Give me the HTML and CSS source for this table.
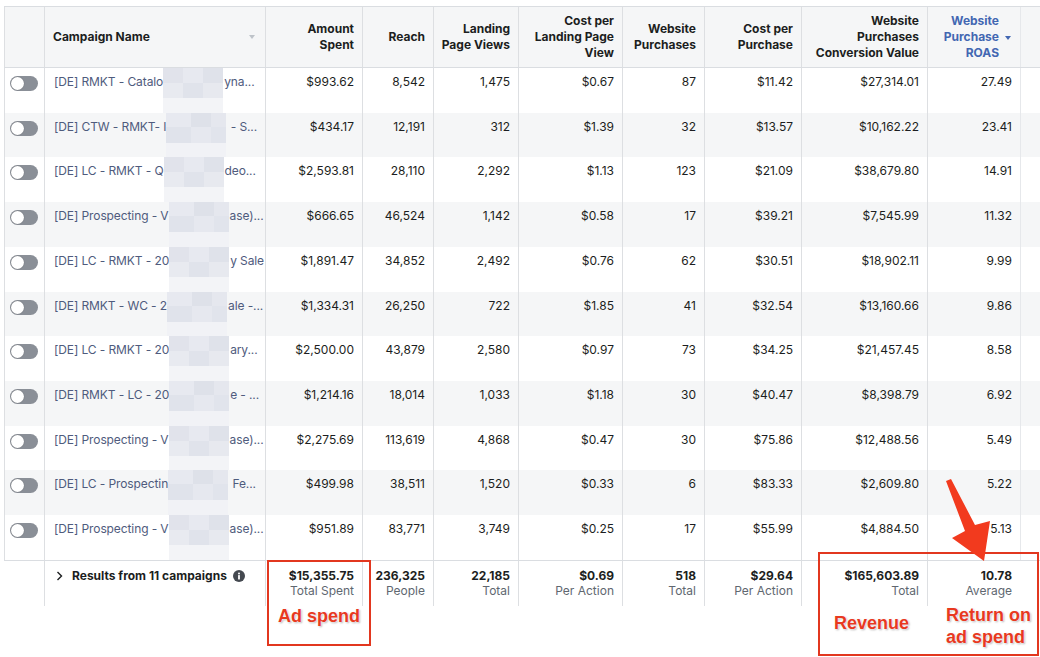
FILE: index.html
```html
<!DOCTYPE html>
<html lang="en">
<head>
<meta charset="utf-8">
<title>Campaigns</title>
<link rel="stylesheet" href="styles.css">
</head>
<body>
<div class="page">
  <div class="table">
    <div class="row head">
      <div class="c c0"></div>
      <div class="c c1 hname"><span>Campaign Name</span><i class="sort grey"></i></div>
      <div class="c num"><span class="ht">Amount<br>Spent</span></div>
      <div class="c num"><span class="ht">Reach</span></div>
      <div class="c num"><span class="ht">Landing<br>Page Views</span></div>
      <div class="c num"><span class="ht">Cost per<br>Landing Page<br>View</span></div>
      <div class="c num"><span class="ht">Website<br>Purchases</span></div>
      <div class="c num"><span class="ht">Cost per<br>Purchase</span></div>
      <div class="c num"><span class="ht">Website<br>Purchases<br>Conversion Value</span></div>
      <div class="c num roas"><span class="ht">Website<br>Purchase<br>ROAS</span><i class="sort blue"></i></div>
      <div class="c fill"></div>
    </div>

    <div class="row">
      <div class="c c0"><span class="tog"></span></div>
      <div class="c c1 name"><span class="pre">[DE] RMKT - Catalo</span><span class="blur b1"></span><span class="post">yna...</span></div>
      <div class="c num">$993.62</div><div class="c num">8,542</div><div class="c num">1,475</div><div class="c num">$0.67</div><div class="c num">87</div><div class="c num">$11.42</div><div class="c num">$27,314.01</div><div class="c num">27.49</div><div class="c fill"></div>
    </div>
    <div class="row">
      <div class="c c0"><span class="tog"></span></div>
      <div class="c c1 name"><span class="pre">[DE] CTW - RMKT- I</span><span class="blur b2"></span><span class="post">&nbsp;- S...</span></div>
      <div class="c num">$434.17</div><div class="c num">12,191</div><div class="c num">312</div><div class="c num">$1.39</div><div class="c num">32</div><div class="c num">$13.57</div><div class="c num">$10,162.22</div><div class="c num">23.41</div><div class="c fill"></div>
    </div>
    <div class="row">
      <div class="c c0"><span class="tog"></span></div>
      <div class="c c1 name"><span class="pre">[DE] LC - RMKT - Q</span><span class="blur b1"></span><span class="post">deo...</span></div>
      <div class="c num">$2,593.81</div><div class="c num">28,110</div><div class="c num">2,292</div><div class="c num">$1.13</div><div class="c num">123</div><div class="c num">$21.09</div><div class="c num">$38,679.80</div><div class="c num">14.91</div><div class="c fill"></div>
    </div>
    <div class="row">
      <div class="c c0"><span class="tog"></span></div>
      <div class="c c1 name"><span class="pre">[DE] Prospecting - V</span><span class="blur b2"></span><span class="post">ase)...</span></div>
      <div class="c num">$666.65</div><div class="c num">46,524</div><div class="c num">1,142</div><div class="c num">$0.58</div><div class="c num">17</div><div class="c num">$39.21</div><div class="c num">$7,545.99</div><div class="c num">11.32</div><div class="c fill"></div>
    </div>
    <div class="row">
      <div class="c c0"><span class="tog"></span></div>
      <div class="c c1 name"><span class="pre">[DE] LC - RMKT - 20</span><span class="blur b1"></span><span class="post">y Sale</span></div>
      <div class="c num">$1,891.47</div><div class="c num">34,852</div><div class="c num">2,492</div><div class="c num">$0.76</div><div class="c num">62</div><div class="c num">$30.51</div><div class="c num">$18,902.11</div><div class="c num">9.99</div><div class="c fill"></div>
    </div>
    <div class="row">
      <div class="c c0"><span class="tog"></span></div>
      <div class="c c1 name"><span class="pre">[DE] RMKT - WC - 2</span><span class="blur b2"></span><span class="post">ale -...</span></div>
      <div class="c num">$1,334.31</div><div class="c num">26,250</div><div class="c num">722</div><div class="c num">$1.85</div><div class="c num">41</div><div class="c num">$32.54</div><div class="c num">$13,160.66</div><div class="c num">9.86</div><div class="c fill"></div>
    </div>
    <div class="row">
      <div class="c c0"><span class="tog"></span></div>
      <div class="c c1 name"><span class="pre">[DE] LC - RMKT - 20</span><span class="blur b1"></span><span class="post">ary...</span></div>
      <div class="c num">$2,500.00</div><div class="c num">43,879</div><div class="c num">2,580</div><div class="c num">$0.97</div><div class="c num">73</div><div class="c num">$34.25</div><div class="c num">$21,457.45</div><div class="c num">8.58</div><div class="c fill"></div>
    </div>
    <div class="row">
      <div class="c c0"><span class="tog"></span></div>
      <div class="c c1 name"><span class="pre">[DE] RMKT - LC - 20</span><span class="blur b2"></span><span class="post">e - ...</span></div>
      <div class="c num">$1,214.16</div><div class="c num">18,014</div><div class="c num">1,033</div><div class="c num">$1.18</div><div class="c num">30</div><div class="c num">$40.47</div><div class="c num">$8,398.79</div><div class="c num">6.92</div><div class="c fill"></div>
    </div>
    <div class="row">
      <div class="c c0"><span class="tog"></span></div>
      <div class="c c1 name"><span class="pre">[DE] Prospecting - V</span><span class="blur b1"></span><span class="post">ase)...</span></div>
      <div class="c num">$2,275.69</div><div class="c num">113,619</div><div class="c num">4,868</div><div class="c num">$0.47</div><div class="c num">30</div><div class="c num">$75.86</div><div class="c num">$12,488.56</div><div class="c num">5.49</div><div class="c fill"></div>
    </div>
    <div class="row">
      <div class="c c0"><span class="tog"></span></div>
      <div class="c c1 name"><span class="pre">[DE] LC - Prospectin</span><span class="blur b2"></span><span class="post">&nbsp;Fe...</span></div>
      <div class="c num">$499.98</div><div class="c num">38,511</div><div class="c num">1,520</div><div class="c num">$0.33</div><div class="c num">6</div><div class="c num">$83.33</div><div class="c num">$2,609.80</div><div class="c num">5.22</div><div class="c fill"></div>
    </div>
    <div class="row">
      <div class="c c0"><span class="tog"></span></div>
      <div class="c c1 name"><span class="pre">[DE] Prospecting - V</span><span class="blur b1"></span><span class="post">ase)...</span></div>
      <div class="c num">$951.89</div><div class="c num">83,771</div><div class="c num">3,749</div><div class="c num">$0.25</div><div class="c num">17</div><div class="c num">$55.99</div><div class="c num">$4,884.50</div><div class="c num">5.13</div><div class="c fill"></div>
    </div>

    <div class="row foot">
      <div class="c c0"></div>
      <div class="c c1 res">
        <svg class="chev" width="7" height="10" viewBox="0 0 7 10"><polyline points="1.5,1 5.5,5 1.5,9" fill="none" stroke="#1c1e21" stroke-width="1.4"/></svg>
        <span>Results from 11 campaigns</span>
        <svg class="info" width="12" height="12" viewBox="0 0 12 12"><circle cx="6" cy="6" r="6" fill="#444950"/><circle cx="6" cy="3.4" r="1" fill="#fff"/><rect x="5.1" y="5" width="1.8" height="4.4" rx="0.5" fill="#fff"/></svg>
      </div>
      <div class="c num"><b>$15,355.75</b><span>Total Spent</span></div>
      <div class="c num"><b>236,325</b><span>People</span></div>
      <div class="c num"><b>22,185</b><span>Total</span></div>
      <div class="c num"><b>$0.69</b><span>Per Action</span></div>
      <div class="c num"><b>518</b><span>Total</span></div>
      <div class="c num"><b>$29.64</b><span>Per Action</span></div>
      <div class="c num"><b>$165,603.89</b><span>Total</span></div>
      <div class="c num"><b>10.78</b><span>Average</span></div>
      <div class="c fill"></div>
    </div>
  </div>

  <div class="ann box-spend"><span class="label">Ad spend</span></div>
  <div class="ann box-rev">
    <span class="label rev">Revenue</span>
    <span class="label roasl">Return on<br>ad spend</span>
  </div>
  <svg class="arrow" width="60" height="90" viewBox="0 0 60 90">
    <polygon points="6,5 11,3 35,49 50,45 44,85 12,62 25,55" fill="#f23a1e"/>
  </svg>
</div>
</body>
</html>
```

FILE: styles.css
```css
* { box-sizing: border-box; }
html, body { margin: 0; padding: 0; background: #fff; }
body {
  font-family: Inter, "Liberation Sans", Arial, sans-serif;
  font-size: 12px;
  color: #1c1e21;
}
.page {
  position: relative;
  width: 1040px;
  height: 657px;
  overflow: hidden;
  padding: 6px 0 0 4px;
}
.table { display: flex; flex-direction: column; }
.row {
  display: grid;
  grid-template-columns: 40px 221px 97px 71px 85px 104px 82px 97px 126px 93px 10px;
  height: 44.73px;
  background: #fff;
}
.row:nth-child(odd) { background: #f5f6f7; }
.row.head {
  height: 62px;
  background: #f5f6f7;
  border-top: 1px solid #dadde1;
  border-bottom: 1px solid #dadde1;
  font-weight: 700;
  line-height: 16px;
}
.c {
  border-left: 1px solid #dddfe2;
  line-height: 16px;
  padding-top: 6px;
  white-space: nowrap;
}
.num { text-align: right; padding-right: 8px; }
.head .c {
  padding-top: 0;
  display: flex;
  align-items: center;
  justify-content: flex-end;
}
.head .ht { display: block; text-align: right; }
.head .hname { justify-content: space-between; padding-left: 8px; padding-right: 10px; }
.head .roas { color: #4267b2; padding-right: 21px; position: relative; }
.sort {
  display: inline-block;
  width: 0; height: 0;
  border-left: 3.5px solid transparent;
  border-right: 3.5px solid transparent;
  border-top: 4px solid #bec3c9;
}
.sort.blue {
  border-top-color: #4267b2;
  position: absolute;
  right: 9px;
  top: 29px;
}
.fill { border-left: 1px solid #e6e8eb; }

.tog {
  display: block;
  width: 28px;
  height: 15px;
  margin: 2px 0 0 5px;
  border-radius: 8px;
  background: #8a8f97;
  position: relative;
}
.tog::after {
  content: "";
  position: absolute;
  left: 1px; top: 1px;
  width: 13px; height: 13px;
  border-radius: 50%;
  background: #fff;
  box-shadow: 0 0 1px rgba(0,0,0,0.4);
}

.name {
  display: flex;
  align-items: flex-start;
  padding-left: 9px;
  color: #4f5b7d;
  overflow: hidden;
  letter-spacing: -0.1px;
}
.pre { min-width: 108px; flex: none; }
.blur {
  width: 60px;
  flex: none;
  align-self: stretch;
  margin-top: -6px;
  background:
    linear-gradient(90deg, #e1e3eb 0 20px, #e7e9f0 20px 40px, #dfe2ea 40px) 0 0 / 100% 15px no-repeat,
    linear-gradient(90deg, #e8eaf0 0 20px, #e0e3eb 20px 40px, #e7e9ef 40px) 0 15px / 100% 15px no-repeat,
    #f3f4f7;
}
.blur.b2 {
  background:
    linear-gradient(90deg, #e7e9f0 0 25px, #dee1e9 25px 45px, #e5e7ee 45px) 0 0 / 100% 14px no-repeat,
    linear-gradient(90deg, #e0e3eb 0 25px, #e6e8ef 25px 45px, #e1e4ec 45px) 0 14px / 100% 16px no-repeat,
    #f1f2f6;
}
.post { margin-left: 1px; }

.row.foot {
  height: 46px;
  background: #fff;
  border-top: 1px solid #dadde1;
}
.foot .c0 { border-left: none; }
.foot .c { padding-top: 7px; line-height: 15px; }
.foot .num b { display: block; font-weight: 700; }
.foot .num span { display: block; color: #606770; }
.foot .fill { border-left: none; }
.res {
  display: flex;
  align-items: flex-start;
  padding-left: 11px;
  font-weight: 700;
}
.res .chev { margin: 3px 9px 0 0; }
.res .info { margin: 2px 0 0 6px; }

.ann { position: absolute; border: 2px solid #e2371f; }
.label {
  font-family: "Liberation Sans", Arial, sans-serif;
  font-weight: 700;
  font-size: 18px;
  line-height: 22px;
  color: #e8391f;
  text-shadow: 0 0 2px #fff, 0 0 2px #fff, 1px 1px 2px rgba(0,0,0,0.35);
}
.box-spend {
  left: 267px; top: 560px; width: 104px; height: 86px;
  display: flex; justify-content: center; align-items: flex-start;
  padding-top: 43px;
}
.box-rev {
  left: 818px; top: 552px; width: 221px; height: 104px;
  display: flex; align-items: flex-start;
  padding: 50px 0 0 14px;
}
.box-rev .rev { margin-top: 8px; }
.box-rev .roasl { margin-left: 37px; }
.arrow { position: absolute; left: 940px; top: 476px; }
```
